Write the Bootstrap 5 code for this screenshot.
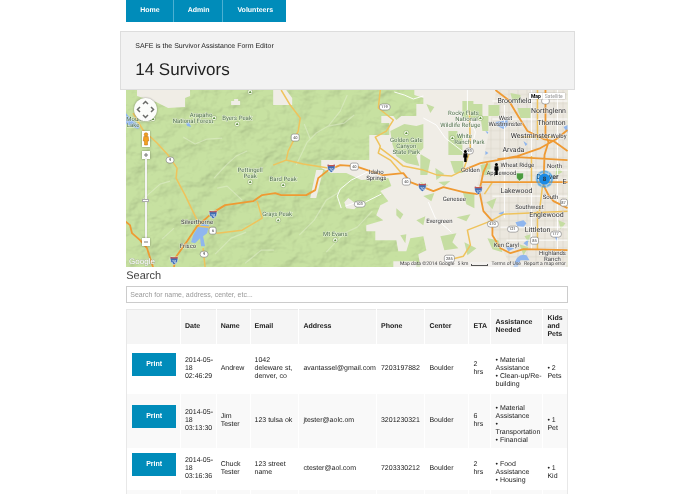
<!DOCTYPE html>
<html lang="en">
<head>
    <meta charset="UTF-8">
    <meta name="viewport" content="width=device-width, initial-scale=1.0">
    <title>SAFE - Survivors</title>
    <link rel="stylesheet" href="https://cdn.jsdelivr.net/npm/bootstrap@5.3.0/dist/css/bootstrap.min.css">
    <style>
        body { font-family: "Liberation Sans", Arial, sans-serif; font-size: 7px; line-height: 8px; color: #222; background: #fff; text-rendering: geometricPrecision; }
        .page-wrap { width: 65.4%; min-width: 440px; }
        .inner { padding: 0 7px 0 6px; }

        .menu-bar .nav-link { background: #008cba; color: #fff; font-weight: bold; line-height: 8px; padding: 7px 13px 7px 14px; border-right: 1px solid #4db0d2; }
        .menu-bar .nav-item:last-child .nav-link { border-right: 0; }

        .intro { background: #f2f2f2; border: 1px solid #ddd; margin-top: 9px; padding: 11px 14px 8px; }
        .intro h1 { font-size: 17px; line-height: 22px; font-weight: normal; margin: 8px 0 0; }

        .map-box svg.map-art { display: block; width: 100%; height: auto; }
        .map-art text { font-family: Roboto, "Liberation Sans", sans-serif; font-size: 6px; fill: #333; text-anchor: middle; paint-order: stroke; stroke: #fff; stroke-width: 1px; stroke-opacity: .6; }
        .map-art .town text { font-size: 7px; }
        .map-art .park text { fill: #4f6f4a; }
        .map-art .shields text { font-size: 4px; stroke: none; }
        .map-box button, .map-box input { position: absolute; padding: 0; border: 0; background: #fff; }
        .map-box button { box-shadow: 0 0 2px rgba(0, 0, 0, .45); display: flex; align-items: center; justify-content: center; }
        .map-box .pan { left: 8px; top: 8px; width: 23px; height: 23px; border-radius: 50%; opacity: .95; }
        .map-box .pegman { left: 16px; top: 41px; width: 8px; height: 16px; }
        .map-box .zoom-in, .map-box .zoom-out { left: 16px; width: 8px; height: 8px; }
        .map-box .zoom-in { top: 61px; }
        .map-box .zoom-out { top: 148px; }
        .map-box .zoom-level { left: -20px; top: 105px; width: 80px; height: 8px; margin: 0; transform: rotate(-90deg); appearance: none; background: transparent; }
        .zoom-level::-webkit-slider-runnable-track { height: 2px; background: #f4f4f4; box-shadow: 0 0 1px #777; }
        .zoom-level::-webkit-slider-thumb { appearance: none; width: 3px; height: 7px; margin-top: -3px; background: #fff; border: 1px solid #aaa; }
        .map-kind { position: absolute; top: 3px; right: 3px; font-family: Roboto, sans-serif; font-size: 5px; line-height: 6px; }
        .map-box .map-kind button { position: static; padding: 0 2px; color: #999; box-shadow: 0 0 1px #888; }
        .map-box .map-kind button.active { color: #000; font-weight: bold; }
        .map-foot { position: absolute; right: 2px; bottom: 0; gap: 3px; font-family: Roboto, sans-serif; font-size: 5px; line-height: 5px; color: #444; background: rgba(245, 245, 245, .5); }
        .map-foot a { color: #444; text-decoration: none; }
        .scale-bar { width: 17px; height: 2px; border: 1px solid #555; border-top: 0; }

        .search-label { display: block; font-size: 11px; line-height: 13px; color: #444; margin: 3px 0; }
        .search-box { height: 17px; min-height: 0; padding: 0 3px; font-size: 7px; line-height: 15px; border: 1px solid #ccc; border-radius: 0; }
        .search-box::placeholder { color: #999; }

        .people { --bs-table-color: #222; table-layout: fixed; margin: 6px 0 0; border: 1px solid #e8e8e8; font-size: 7px; line-height: 8px; }
        .people > :not(caption) > * > * { padding: 3px 3px 3px 4px; border: 0; border-right: 1px solid #fff; vertical-align: middle; box-shadow: none; }
        .people > :not(caption) > * > :last-child { border-right: 0; padding-right: 0; }
        .people > thead > tr > th { background: #f5f5f5; height: 34px; }
        .people > tbody > tr { height: 42px; }
        .people > tbody > tr.roomy { height: 50px; }
        .people > tbody > tr:nth-child(even) > td { background: #f9f9f9; }
        .people > :not(caption) > * > .tight { padding-right: 0; }
        .people > tbody > tr > td:first-child { padding-left: 5px; padding-right: 4px; }
        .needs { padding-top: 8px; }
        .print-btn { width: 100%; height: 23px; margin-bottom: 9px; padding: 0; font-size: 7px; font-weight: bold; line-height: 8px; color: #fff; background: #008cba; border: 0; border-radius: 0; }
        .c-act { width: 12.2%; }
        .c-date { width: 8.1%; }
        .c-name { width: 7.7%; }
        .c-mail { width: 11.1%; }
        .c-addr { width: 17.6%; }
        .c-phone { width: 11%; }
        .c-center { width: 10%; }
        .c-eta { width: 5%; }
        .c-need { width: 11.8%; }
        .c-kids { width: 5.5%; }
    </style>
</head>
<body>
    <div class="page-wrap mx-auto">
        <nav class="inner">
            <ul class="nav menu-bar">
                <li class="nav-item"><a class="nav-link" href="#">Home</a></li>
                <li class="nav-item"><a class="nav-link" href="#">Admin</a></li>
                <li class="nav-item"><a class="nav-link" href="#">Volunteers</a></li>
            </ul>
        </nav>

        <header class="intro">
            <p class="m-0">SAFE is the Survivor Assistance Form Editor</p>
            <h1>14 Survivors</h1>
        </header>

        <main class="inner">
            <div class="map-box position-relative overflow-hidden">
                <svg class="map-art" viewBox="0 0 441 177" role="img" aria-label="Map of survivors">
                    <defs>
                        <filter id="relief" x="0" y="0" width="100%" height="100%">
                            <feTurbulence type="fractalNoise" baseFrequency="0.035 0.045" numOctaves="4" seed="8" />
                            <feDiffuseLighting surfaceScale="9" lighting-color="#ffffff" diffuseConstant="1.1">
                                <feDistantLight azimuth="225" elevation="55" />
                            </feDiffuseLighting>
                        </filter>
                        <pattern id="blocks" width="9" height="9" patternUnits="userSpaceOnUse">
                            <path d="M0 4.500H9M4.500 0V9" stroke="#d9d4c9" stroke-width=".6" />
                        </pattern>
                        <g id="peak">
                            <circle r="2.600" fill="#f4f8e8" stroke="#8fae6a" stroke-width=".6" />
                            <path d="M0-1.500L1.400 1H-1.400Z" fill="#5d9140" />
                        </g>
                        <g id="i70">
                            <path d="M-3.500-3.500Q0-2.500 3.500-3.500Q5 2 0 4.500Q-5 2-3.500-3.500Z" fill="#3f6fb5" stroke="#fff" stroke-width=".5" />
                            <path d="M-3.500-3.500Q0-2.500 3.500-3.500L3.800-1.800H-3.800Z" fill="#c25450" />
                            <text y="2.500" style="fill:#fff;font-size:4px;stroke:none">70</text>
                        </g>
                        <g id="person">
                            <circle cy="-4.500" r="1.500" />
                            <path d="M-1.800-2.800H1.800L2.200 1.500H1.200V6H-1.200V1.500H-2.200Z" />
                        </g>
                    </defs>

                    <rect width="441" height="177" fill="#c7e1a1" />
                    <rect width="441" height="177" filter="url(#relief)" opacity=".19" style="mix-blend-mode:multiply" />
                    <g fill="none" stroke="#e3efcf" stroke-width="1.200" opacity=".5" stroke-linejoin="round">
                        <path d="M170 75L181 52 190 43 202 36 214 21 221 5M184 49L178 34M202 36L218 33 228 25M57 47L69 54 81 49 96 48M88 88L100 75 110 66 121 61M116 110L101 96 91 98M16 110L34 94 44 91M173 145L188 130 200 110 213 102M200 162L218 143 231 137 246 121M89 164L105 148 120 142M119 173L135 160 148 160M36 149L48 138" />
                    </g>
                    <!-- open land and city -->
                    <g fill="#f0ede6">
                        <path d="M11 0H64V6L59 8V17L42 18 30 12 11 6ZM105 11H108V9H112V11H114V15H105ZM147 0H160L166 8V15H147Z" />
                        <path d="M441 0H288V5L297 8V14H290V26H275L270 30 267 26H255V33H263V45H243V70H195V78L205 83H220L235 90 262 88 265 96 254 101 262 111 254 115 250 125 257 130 240 135V141H249V150H270L272 161H280L284 148 297 146 300 160 292 164 294 177H441Z" />
                        <path d="M190 80H197L190 108H184ZM218 112L222 108 232 115 228 119 220 118ZM267 171H290V177H267Z" />
                    </g>
                    <path d="M370 0H441V177H385L361 130 350 100 361 50Z" fill="#ebe7de" />
                    <path d="M370 0H441V177H385L361 130 350 100 361 50Z" fill="url(#blocks)" />
                    <g fill="#c5dda2">
                        <path d="M264 41L278 34 290 36 297 34V58L290 66 293 76 280 73 270 66 266 54Z" />
                        <path d="M336 11H347V14H356V28H336ZM354 26H362V41H356ZM362 15H373V26H362ZM384 3L394 5V13L386 11ZM391 18H404V28H394ZM322 41H331V45H336V65H322ZM324 71H337V83H328ZM354 75L364 73V85H356ZM294 64L304 70 301 85H294ZM309 78L318 84 310 90Z" />
                        <path d="M336 101L348 104V118L340 114ZM297 106L308 103 305 111ZM330 127L344 124 340 131ZM314 146L330 143 326 152 332 158 318 160ZM361 148L372 150 376 162 366 159ZM338 152L350 158 341 165ZM360 112L370 108 366 119ZM270 118L277 124 274 129 270 125ZM274 145L280 144 279 153ZM393 154L402 157 397 165ZM294 92L302 95 297 99ZM407 124L412 121 414 126Z" />
                        <path d="M300 14L308 17 304 23ZM312 92L324 91 318 96ZM430 76L436 82 429 86ZM432 130L439 133 434 139ZM398 146L404 144 402 152ZM290 130L299 126 297 135Z" />
                    </g>

                    <g fill="#8fb6ee">
                        <path d="M71 138L77 133 83 135 81 143 77 146 79 156H75L74 148 69 153 65 152 67 145ZM0 23L4 28 14 36 12 39 0 34Z" />
                        <path d="M369 32L381 30 382 35 377 39 371 36ZM389 132L397 130 400 133 397 137 391 136ZM387 177Q390 162 400 165L403 170 394 170 391 177ZM437 37L441 35V43ZM359 41L362 42 361 44ZM397 51L401 54 399 56ZM372 123L378 121 376 125ZM397 153L402 149 401 156ZM359 61L362 63 359 65ZM379 156L388 158 382 161ZM60 33L63 32 65 37 61 36ZM427 142L432 149 430 151Z" />
                    </g>

                    <g fill="none" stroke="#fff" stroke-width=".9">
                        <path d="M268 2L278 5 287 9 297 6M215 118L211 106 214 99 225 90 245 80M219 116L228 113 239 112 255 104M297 28L310 35 319 48 341 65M302 112L309 128 325 142M341 0V22L349 42 345 60M366 11H441M366 29H441M361 80H441M366 106H441M374 137H441M380 150H441M378 15V128M405 0V160M431 0V160" />
                    </g>
                    <g fill="none" stroke="#efc35c" stroke-width="1.500" stroke-linejoin="round">
                        <path d="M7 23L17 40 31 53 42 65 51 78 50 88 59 105 71 130M72 136L83 137 91 143 116 140 136 128 131 111M79 177L77 158M147 75L160 70 162 61 172 41 174 28 164 15 155 0M160 70L177 74 202 78" />
                        <path d="M254 0L252 18 267 30 260 41 249 47 254 56 252 63 264 70 275 83M254 58L270 70 277 76 297 80 311 85 325 86 337 80M321 170L337 166 344 155 341 140 364 131 377 124 441 121M393 47H427M405 92V66M413 121L416 96M366 92L358 104M411 0V50M411 121V159M343 20L344 60 337 80" />
                    </g>
                    <g fill="none" stroke="#ef9a33" stroke-width="1.800" stroke-linejoin="round">
                        <path d="M-1 131L4 135 6 143 14 150 21 158 27 177M48 177L49 168 61 151 71 136 86 123 99 115 127 111 136 105 149 103 155 105 180 105 189 100 192 88 202 80 214 75 229 76 244 81 257 85 277 83 284 92 297 97 307 101 317 97 337 102 351 104 354 96 357 82 361 73" />
                        <path d="M337 80L354 73 371 70 391 66 414 58 430 49 441 40M371 69L391 67 441 70M369 0L382 10 391 25 401 41 417 49 427 51 441 61M419 0V45L422 52 418 65 417 95 422 105 427 111 441 118M355 92H441M353 101L357 121 366 131V145L374 158 384 163 397 159 441 160" />
                    </g>

                    <g class="park">
                        <text x="75" y="27">Arapaho</text>
                        <text x="67" y="33">National Forest</text>
                        <text x="111" y="30">Byers Peak</text>
                        <text x="124" y="82">Pettingell</text>
                        <text x="124" y="88">Peak</text>
                        <text x="157" y="91">Bard Peak</text>
                        <text x="151" y="126">Grays Peak</text>
                        <text x="209" y="146">Mt Evans</text>
                        <text x="280" y="52">Golden Gate</text>
                        <text x="280" y="58">Canyon</text>
                        <text x="280" y="64">State Park</text>
                        <text x="337" y="25">Rocky Flats</text>
                        <text x="340" y="31">National</text>
                        <text x="334" y="37">Wildlife Refuge</text>
                        <text x="338" y="48">White</text>
                        <text x="343" y="54">Ranch Park</text>
                        <text x="13" y="31">Mountain</text>
                        <text x="7" y="37">Lake</text>
                    </g>
                    <use href="#peak" x="88" y="28" />
                    <use href="#peak" x="27" y="29" />
                    <use href="#peak" x="111" y="34" />
                    <use href="#peak" x="124" y="92" />
                    <use href="#peak" x="157" y="95" />
                    <use href="#peak" x="152" y="130" />
                    <use href="#peak" x="209" y="150" />
                    <use href="#peak" x="280" y="43" />
                    <use href="#peak" x="354" y="28" />
                    <use href="#peak" x="326" y="48" />
                    <use href="#peak" x="124" y="2" />

                    <g>
                        <text x="71" y="134">Silverthorne</text>
                        <text x="62" y="158">Frisco</text>
                        <text x="250" y="84">Idaho</text>
                        <text x="250" y="90">Springs</text>
                        <text x="379" y="30">West</text>
                        <text x="379" y="36">Westminster</text>
                        <text x="432" y="48">Welby</text>
                        <text x="344" y="82">Golden</text>
                        <text x="375" y="85">Applewood</text>
                        <text x="391" y="77">Wheat Ridge</text>
                        <text x="428" y="78">North</text>
                        <text x="424" y="109">South</text>
                        <text x="403" y="119">Southwest</text>
                        <text x="328" y="111">Genesee</text>
                        <text x="313" y="133">Evergreen</text>
                        <text x="380" y="157">Ken Caryl</text>
                        <text x="426" y="165">Highlands</text>
                        <text x="426" y="171">Ranch</text>
                    </g>
                    <g class="town">
                        <text x="388" y="13">Broomfield</text>
                        <text x="422" y="23">Northglenn</text>
                        <text x="425" y="35">Thornton</text>
                        <text x="404" y="48">Westminster</text>
                        <text x="387" y="62">Arvada</text>
                        <text x="390" y="103">Lakewood</text>
                        <text x="420" y="127">Englewood</text>
                        <text x="411" y="142">Littleton</text>
                        <text x="421" y="89" font-weight="bold">Denver</text>
                        <text x="438" y="94">E</text>
                    </g>

                    <g class="shields">
                        <g fill="#fff" stroke="#777" stroke-width=".6">
                            <rect x="40" y="67" width="8" height="6" rx="3" />
                            <rect x="165" y="44" width="8" height="7" rx="2" />
                            <rect x="253" y="14" width="11" height="6" rx="3" />
                            <rect x="224" y="73" width="8" height="7" rx="2" />
                            <rect x="228" y="111" width="11" height="6" rx="3" />
                            <rect x="276" y="88" width="8" height="7" rx="2" />
                            <rect x="83" y="137" width="7" height="7" rx="2" />
                            <rect x="74" y="161" width="8" height="6" rx="3" />
                            <rect x="339" y="58" width="8" height="6" rx="3" />
                            <rect x="361" y="131" width="11" height="6" rx="3" />
                            <rect x="381" y="136" width="11" height="6" rx="3" />
                            <rect x="424" y="141" width="11" height="6" rx="3" />
                            <rect x="404" y="147" width="8" height="7" rx="2" />
                            <rect x="318" y="165" width="10" height="7" rx="2" />
                            <rect x="434" y="109" width="7" height="7" rx="2" />
                            <rect x="415" y="8" width="8" height="6" rx="3" />
                        </g>
                        <text x="44" y="71">9</text>
                        <text x="169" y="49">40</text>
                        <text x="258" y="18">119</text>
                        <text x="228" y="78">40</text>
                        <text x="233" y="115">103</text>
                        <text x="280" y="93">40</text>
                        <text x="87" y="142">6</text>
                        <text x="78" y="165">9</text>
                        <text x="343" y="62">93</text>
                        <text x="366" y="135">470</text>
                        <text x="386" y="140">121</text>
                        <text x="429" y="145">177</text>
                        <text x="408" y="152">85</text>
                        <text x="323" y="170">285</text>
                        <text x="437" y="114">87</text>
                        <use href="#i70" x="205" y="78" />
                        <use href="#i70" x="87" y="124" />
                        <use href="#i70" x="48" y="170" />
                        <use href="#i70" x="296" y="97" />
                        <use href="#i70" x="352" y="100" />
                        <path d="M390 83H397V88L393 91 390 88Z" fill="#4c9b3f" stroke="#fff" stroke-width=".5" />
                    </g>

                    <use href="#person" x="339" y="66" />
                    <use href="#person" x="370" y="79" />
                    <circle cx="418" cy="89" r="9" fill="#2f9bee" opacity=".3" />
                    <circle cx="418" cy="89" r="7.500" fill="none" stroke="#2f9bee" stroke-width="1.500" stroke-dasharray="4 1" opacity=".6" />
                    <circle cx="418" cy="89" r="5.500" fill="#1b8be6" />
                    <text x="418" y="91" font-weight="bold" style="stroke:none">8</text>
                    <text x="16" y="174" style="font-family:'Liberation Sans';font-size:8px;fill:#fff;stroke:#889;stroke-width:1px;stroke-opacity:.35">Google</text>
                </svg>

                <button type="button" class="pan" aria-label="Pan">
                    <svg width="23" height="23" viewBox="0 0 23 23" fill="none" stroke="#666" stroke-width="1.500"><path d="M9 6L11.500 3.500 14 6M9 17L11.500 19.500 14 17M6 9L3.500 11.500 6 14M17 9L19.500 11.500 17 14" /></svg>
                </button>
                <button type="button" class="pegman" aria-label="Street view">
                    <svg width="8" height="14" viewBox="0 0 8 14" fill="#f3a021" stroke="#b96d0b" stroke-width=".5"><circle cx="4" cy="2.500" r="1.800" /><path d="M1.800 4.500H6.200L6.700 9H5.500V13H2.500V9H1.300Z" /></svg>
                </button>
                <button type="button" class="zoom-in" aria-label="Zoom in">
                    <svg width="8" height="8" viewBox="0 0 8 8" stroke="#777" stroke-width="1"><path d="M2 4H6M4 2V6" /></svg>
                </button>
                <input type="range" class="zoom-level" aria-label="Zoom level" min="0" max="100" value="48">
                <button type="button" class="zoom-out" aria-label="Zoom out">
                    <svg width="8" height="8" viewBox="0 0 8 8" stroke="#777" stroke-width="1"><path d="M2 4H6" /></svg>
                </button>
                <div class="map-kind d-flex">
                    <button type="button" class="active">Map</button>
                    <button type="button">Satellite</button>
                </div>
                <div class="map-foot d-flex align-items-center">
                    <span>Map data ©2014 Google</span>
                    <span>5 km</span>
                    <span class="scale-bar"></span>
                    <a href="#">Terms of Use</a>
                    <a href="#">Report a map error</a>
                </div>
            </div>

            <label for="search" class="search-label">Search</label>
            <input type="text" class="form-control search-box" id="search" name="search" placeholder="Search for name, address, center, etc...">

            <table class="table people">
                <thead>
                    <tr>
                        <th class="c-act"></th>
                        <th class="c-date">Date</th>
                        <th class="c-name">Name</th>
                        <th class="c-mail">Email</th>
                        <th class="c-addr">Address</th>
                        <th class="c-phone">Phone</th>
                        <th class="c-center">Center</th>
                        <th class="c-eta tight">ETA</th>
                        <th class="c-need">Assistance Needed</th>
                        <th class="c-kids">Kids and Pets</th>
                    </tr>
                </thead>
                <tbody>
                    <tr class="roomy">
                        <td><button type="button" class="btn print-btn">Print</button></td>
                        <td class="tight">2014-05-<wbr>18 02:46:29</td>
                        <td class="tight">Andrew</td>
                        <td class="tight">1042 deleware st, denver, co</td>
                        <td class="tight">avantassel@gmail.com</td>
                        <td>7203197882</td>
                        <td>Boulder</td>
                        <td class="tight">2<br>hrs</td>
                        <td class="tight"><div class="needs">• Material Assistance<br>• Clean-up/Re-<wbr>building</div></td>
                        <td><div class="needs">• 2 Pets</div></td>
                    </tr>
                    <tr>
                        <td><button type="button" class="btn print-btn">Print</button></td>
                        <td class="tight">2014-05-<wbr>18 03:13:30</td>
                        <td>Jim Tester</td>
                        <td>123 tulsa ok</td>
                        <td>jtester@aolc.om</td>
                        <td>3201230321</td>
                        <td>Boulder</td>
                        <td class="tight">6<br>hrs</td>
                        <td><div class="needs">• Material Assistance<br>•<br>Transportation<br>• Financial</div></td>
                        <td><div class="needs">• 1 Pet</div></td>
                    </tr>
                    <tr>
                        <td><button type="button" class="btn print-btn">Print</button></td>
                        <td class="tight">2014-05-<wbr>18 03:16:36</td>
                        <td>Chuck Tester</td>
                        <td>123 street name</td>
                        <td>ctester@aol.com</td>
                        <td>7203330212</td>
                        <td>Boulder</td>
                        <td class="tight">2<br>hrs</td>
                        <td><div class="needs">• Food Assistance<br>• Housing</div></td>
                        <td><div class="needs">• 1 Kid</div></td>
                    </tr>
                    <tr>
                        <td></td><td></td><td></td><td></td><td></td><td></td><td></td><td></td><td></td><td></td>
                    </tr>
                </tbody>
            </table>
        </main>
    </div>

    <script src="https://cdn.jsdelivr.net/npm/bootstrap@5.3.0/dist/js/bootstrap.bundle.min.js"></script>
</body>
</html>
